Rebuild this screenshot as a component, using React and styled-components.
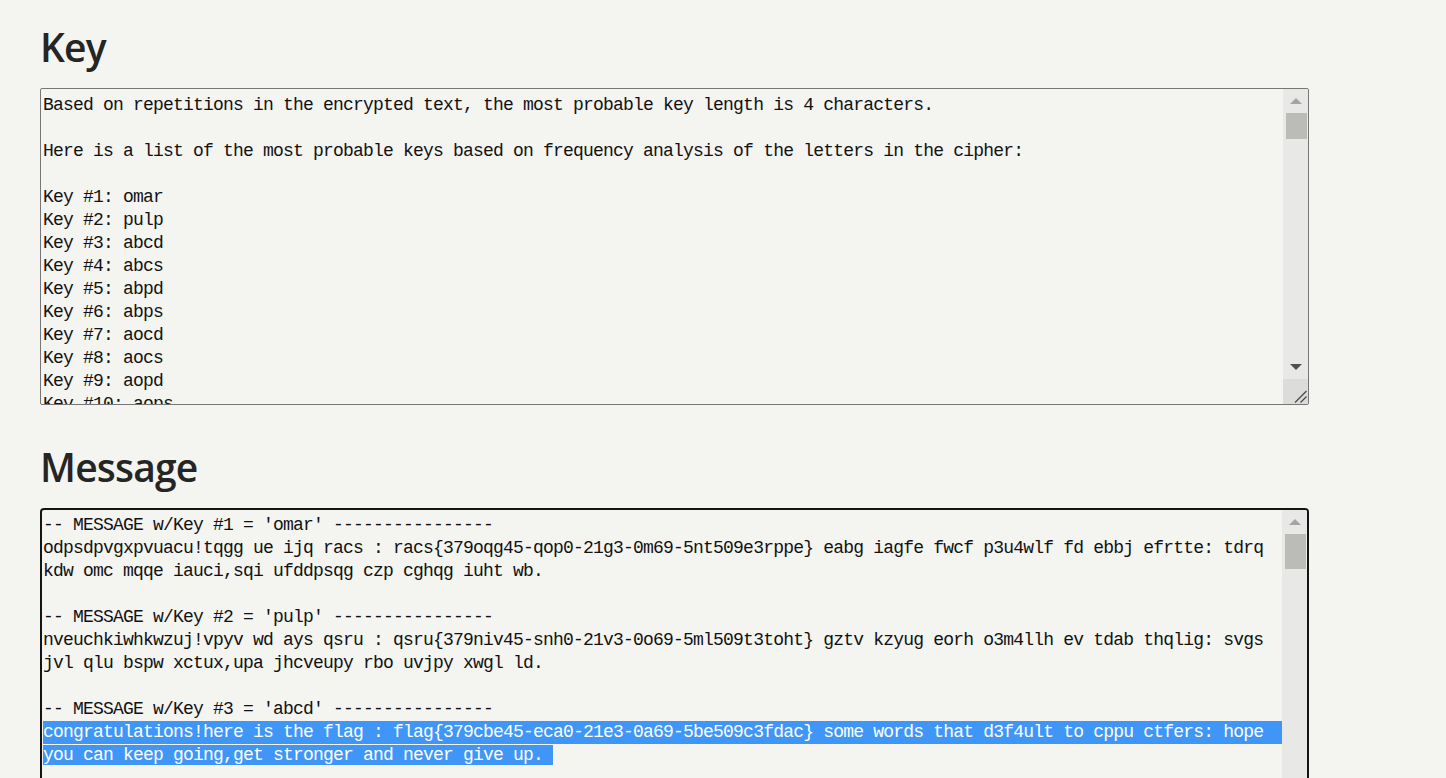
import React from 'react'
import styled, { createGlobalStyle } from 'styled-components'

const GlobalStyle = createGlobalStyle`
html, body {
  margin: 0;
  background: #f4f4f1;
}
body {
  font-family: "Open Sans", "Liberation Sans", sans-serif;
}
`

const keyLines = [
  'Based on repetitions in the encrypted text, the most probable key length is 4 characters.',
  '',
  'Here is a list of the most probable keys based on frequency analysis of the letters in the cipher:',
  '',
  'Key #1: omar',
  'Key #2: pulp',
  'Key #3: abcd',
  'Key #4: abcs',
  'Key #5: abpd',
  'Key #6: abps',
  'Key #7: aocd',
  'Key #8: aocs',
  'Key #9: aopd',
  'Key #10: aops',
]

const messageLines = [
  { text: "-- MESSAGE w/Key #1 = 'omar' ----------------" },
  { text: 'odpsdpvgxpvuacu!tqgg ue ijq racs : racs{379oqg45-qop0-21g3-0m69-5nt509e3rppe} eabg iagfe fwcf p3u4wlf fd ebbj efrtte: tdrq' },
  { text: 'kdw omc mqqe iauci,sqi ufddpsqg czp cghqg iuht wb.' },
  { text: '' },
  { text: "-- MESSAGE w/Key #2 = 'pulp' ----------------" },
  { text: 'nveuchkiwhkwzuj!vpyv wd ays qsru : qsru{379niv45-snh0-21v3-0o69-5ml509t3toht} gztv kzyug eorh o3m4llh ev tdab thqlig: svgs' },
  { text: 'jvl qlu bspw xctux,upa jhcveupy rbo uvjpy xwgl ld.' },
  { text: '' },
  { text: "-- MESSAGE w/Key #3 = 'abcd' ----------------" },
  { text: 'congratulations!here is the flag : flag{379cbe45-eca0-21e3-0a69-5be509c3fdac} some words that d3f4ult to cppu ctfers: hope', sel: 'full' },
  { text: 'you can keep going,get stronger and never give up. ', sel: 'part' },
]

function Scroll({ thumb, resizable }) {
  return (
    <Scrollbar>
      <ArrowButton>
        <Triangle $dir="up" />
      </ArrowButton>
      <Track>
        <Thumb $size={thumb} />
      </Track>
      {resizable && (
        <>
          <ArrowButton>
            <Triangle $dir="down" $enabled />
          </ArrowButton>
          <Corner>
            <svg width="25" height="25" viewBox="0 0 25 25">
              <line x1="12" y1="23.5" x2="23.5" y2="12" stroke="#4a4a4a" strokeWidth="1.2" />
              <line x1="17.5" y1="23.5" x2="23.5" y2="17.5" stroke="#4a4a4a" strokeWidth="1.2" />
            </svg>
          </Corner>
        </>
      )}
    </Scrollbar>
  )
}

export default function App() {
  return (
    <>
      <GlobalStyle />
      <Page>
        <Section>
          <Heading>Key</Heading>
          <TextBox>
            <Content>
              {keyLines.map((l, i) => (
                <Line key={i}>{l}</Line>
              ))}
            </Content>
            <Scroll thumb={26} resizable />
          </TextBox>
        </Section>
        <Section>
          <Heading>Message</Heading>
          <TextBox $focused>
            <Content $focused>
              {messageLines.map((l, i) => (
                <Line key={i} $selected={l.sel === 'full'}>
                  {l.sel === 'part' ? <Mark>{l.text}</Mark> : l.text}
                </Line>
              ))}
            </Content>
            <Scroll thumb={35} />
          </TextBox>
        </Section>
      </Page>
    </>
  )
}

const Page = styled.div`
display: flex;
flex-direction: column;
gap: 35px;
padding: 20px 40px 0;
height: 778px;
box-sizing: border-box;
overflow: hidden;
`

const Section = styled.section`
display: flex;
flex-direction: column;
width: 1269px;
`

const Heading = styled.h2`
margin: 0 0 14px;
font-size: 39px;
line-height: 54px;
font-weight: 600;
color: #252525;
letter-spacing: -0.8px;
`

const TextBox = styled.div`
display: flex;
height: 317px;
flex: none;
box-sizing: border-box;
border: ${(p) => (p.$focused ? '2px solid #141414' : '1px solid #767676')};
border-radius: ${(p) => (p.$focused ? '4px' : '2px')};
overflow: hidden;
`

const Content = styled.div`
flex: 1;
min-width: 0;
padding: ${(p) => (p.$focused ? '4px 0 0 1px' : '5px 0 0 2px')};
overflow: hidden;
`

const Line = styled.div`
height: 23px;
line-height: 23px;
white-space: pre;
font-family: "Liberation Mono", "DejaVu Sans Mono", monospace;
font-size: 18px;
letter-spacing: -0.8px;
color: ${(p) => (p.$selected ? '#ffffff' : '#111111')};
background: ${(p) => (p.$selected ? '#4096f6' : 'transparent')};
`

const Mark = styled.span`
background: #4096f6;
color: #ffffff;
`

const Scrollbar = styled.div`
flex: none;
width: 25px;
display: flex;
flex-direction: column;
background: #e8e8e6;
`

const ArrowButton = styled.div`
height: 24px;
flex: none;
display: flex;
align-items: center;
justify-content: center;
`

const Triangle = styled.div`
width: 0;
height: 0;
border-left: 6px solid transparent;
border-right: 6px solid transparent;
${(p) =>
  p.$dir === 'up'
    ? `border-bottom: 6px solid ${p.$enabled ? '#505050' : '#a4a4a2'};`
    : `border-top: 6px solid ${p.$enabled ? '#505050' : '#a4a4a2'};`}
`

const Track = styled.div`
flex: 1;
padding: 0 1px 0 3px;
`

const Thumb = styled.div`
height: ${(p) => p.$size}px;
background: #bbbbb7;
`

const Corner = styled.div`
height: 25px;
flex: none;
background: #dcdcda;
display: flex;
`
